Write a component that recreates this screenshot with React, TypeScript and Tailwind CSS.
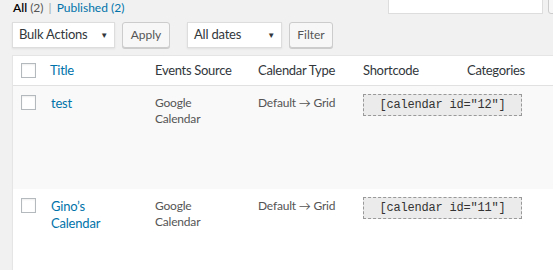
import React from "react";

const font = { fontFamily: "'Segoe UI', Lato, 'Liberation Sans', sans-serif" };

function Checkbox() {
  return <div className="w-[15px] h-[15px] border border-[#b4b9be] bg-white shadow-[inset_0_1px_2px_rgba(0,0,0,0.07)]" />;
}

function Select({ label, width }: { label: string; width: string }) {
  return (
    <div className={`${width} h-[26px] bg-white border border-[#ddd] shadow-[0_1px_2px_rgba(0,0,0,0.07)] flex items-center justify-between pl-[6px] pr-[6px] text-[13px] tracking-[-0.2px] text-[#32373c]`}>
      <span>{label}</span>
      <span className="text-[8px] text-[#32373c]">▼</span>
    </div>
  );
}

function Button({ label, width }: { label: string; width: string }) {
  return (
    <div className={`${width} h-[26px] bg-[#f7f7f7] border border-[#ccc] rounded-[3px] shadow-[0_1px_0_#ccc] flex items-center justify-center text-[12px] text-[#555]`}>
      {label}
    </div>
  );
}

function Shortcode({ id }: { id: string }) {
  return (
    <div className="w-[159px] h-[22px] border border-dashed border-[#999] bg-[#ebebeb] flex items-center justify-center text-[12px] text-[#333] font-['Liberation_Mono','DejaVu_Sans_Mono',monospace]">
      [calendar id="{id}"]
    </div>
  );
}

function Row({ title, id, bg, height }: { title: React.ReactNode; id: string; bg: string; height: string }) {
  return (
    <div className={`grid grid-cols-[27px_105px_103px_105px_104px_140px] ${bg} ${height} text-[12px] tracking-[-0.2px] text-[#555] leading-[16px]`}>
      <div className="pl-[8px] pt-[9px]">
        <Checkbox />
      </div>
      <div className="pl-[11px] pt-[9px] text-[13px] leading-[17px] text-[#0073aa]">{title}</div>
      <div className="pl-[10px] pt-[9px]">
        Google
        <br />
        Calendar
      </div>
      <div className="pl-[10px] pt-[9px]">Default → Grid</div>
      <div className="pl-[10px] pt-[8px]">
        <Shortcode id={id} />
      </div>
      <div />
    </div>
  );
}

export default function App() {
  return (
    <div className="w-[553px] h-[270px] overflow-hidden bg-[#f1f1f1]" style={font}>
      <div className="flex justify-between items-start pl-[13px] h-[16px]">
        <div className="text-[12px] leading-[16px] text-[#0073aa]">
          <span className="text-black font-semibold">All</span> <span className="text-[#555]">(2)</span>{" "}
          <span className="text-[#a0a5aa] px-[2px]">|</span> Published <span>(2)</span>
        </div>
        <div className="flex gap-[5px] -mt-[14px] mr-[-35px]">
          <div className="w-[155px] h-[28px] bg-white border border-[#ddd]" />
          <div className="w-[40px] h-[28px] bg-[#f7f7f7] border border-[#ccc] rounded-[3px]" />
        </div>
      </div>
      <div className="flex items-center pl-[12px] mt-[6px]">
        <Select label="Bulk Actions" width="w-[103px]" />
        <div className="ml-[7px]">
          <Button label="Apply" width="w-[48px]" />
        </div>
        <div className="ml-[17px]">
          <Select label="All dates" width="w-[95px]" />
        </div>
        <div className="ml-[7px]">
          <Button label="Filter" width="w-[44px]" />
        </div>
      </div>
      <div className="ml-[12px] mt-[7px] w-[700px] border border-[#e5e5e5] bg-white shadow-[0_1px_1px_rgba(0,0,0,0.04)]">
        <div className="grid grid-cols-[27px_105px_103px_105px_104px_140px] h-[30px] items-center border-b border-[#e1e1e1] text-[13px] tracking-[-0.3px] text-[#32373c]">
          <div className="pl-[8px]">
            <Checkbox />
          </div>
          <div className="pl-[10px] text-[#0073aa]">Title</div>
          <div className="pl-[10px]">Events Source</div>
          <div className="pl-[10px]">Calendar Type</div>
          <div className="pl-[10px]">Shortcode</div>
          <div className="pl-[10px]">Categories</div>
        </div>
        <Row title="test" id="12" bg="bg-[#f9f9f9]" height="h-[103px]" />
        <Row
          title={
            <>
              Gino’s
              <br />
              Calendar
            </>
          }
          id="11"
          bg="bg-white"
          height="h-[100px]"
        />
      </div>
    </div>
  );
}
